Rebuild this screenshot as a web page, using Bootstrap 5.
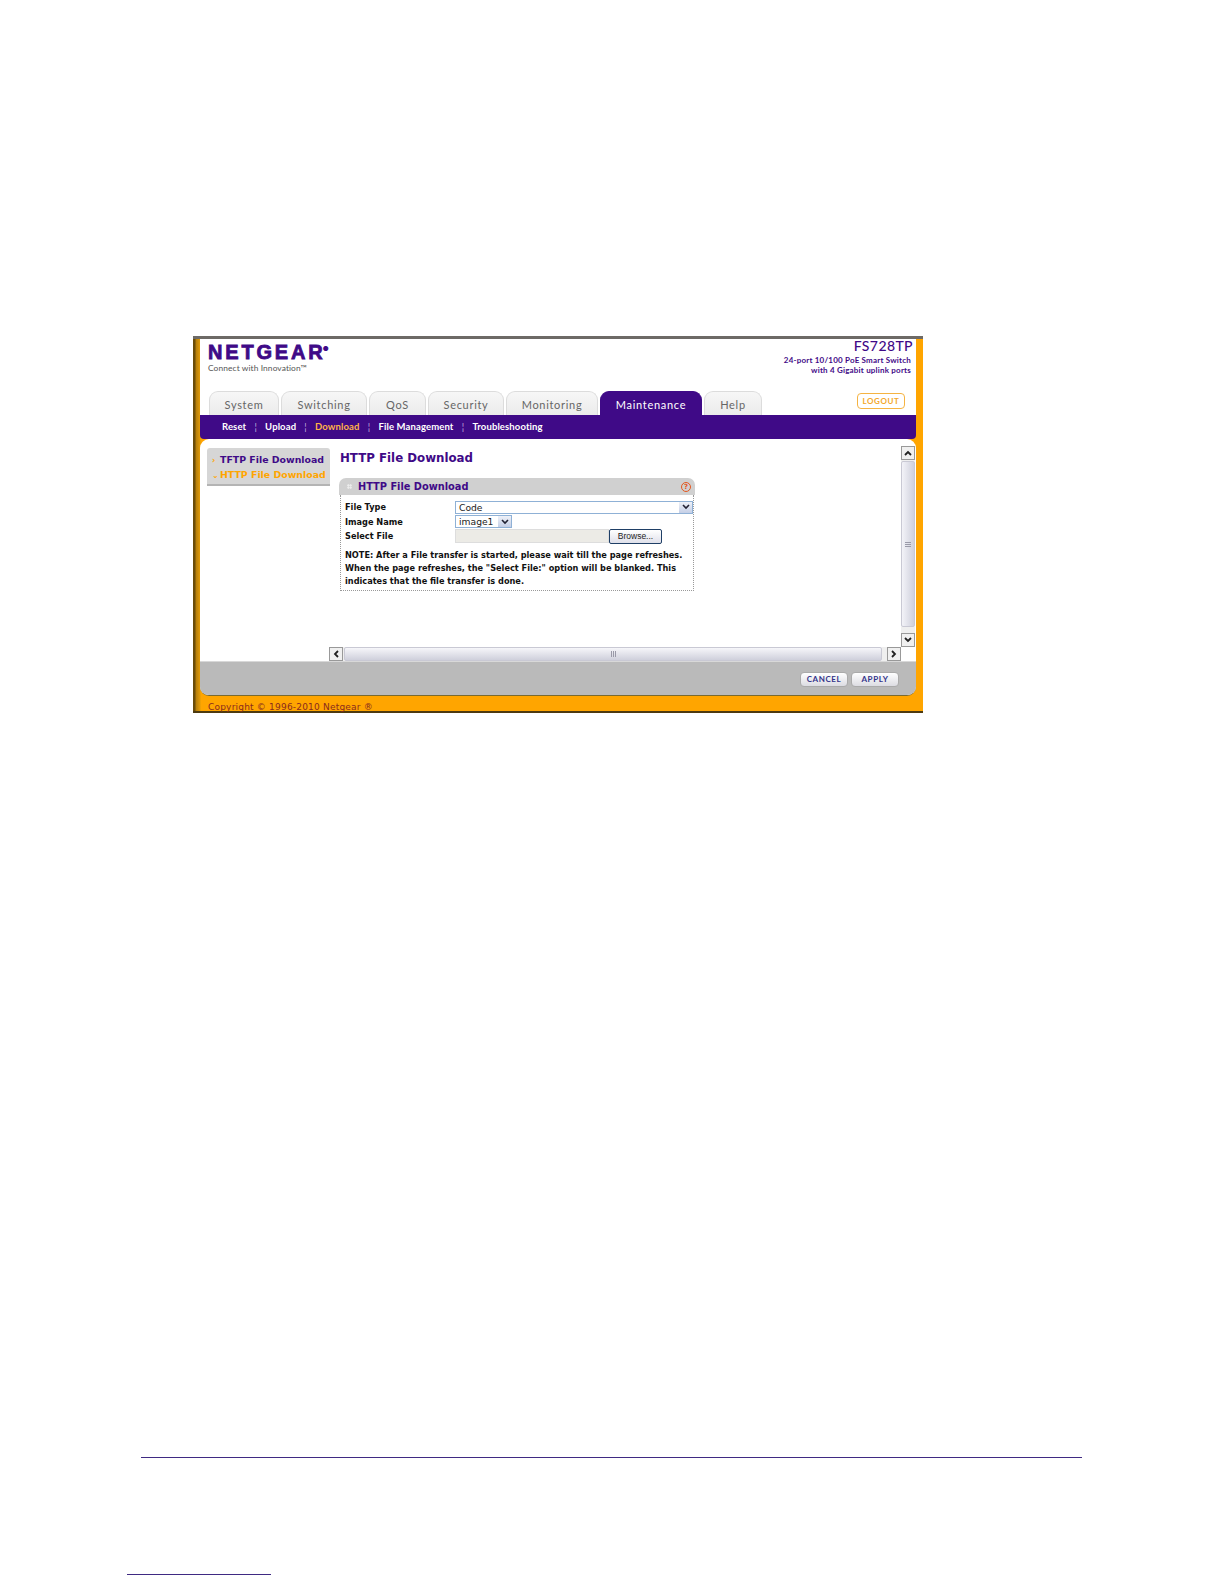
<!DOCTYPE html>
<html lang="en"><head><meta charset="utf-8"><title>HTTP File Download</title>
<link href="https://cdn.jsdelivr.net/npm/bootstrap@5.3.0/dist/css/bootstrap.min.css" rel="stylesheet">
<style>
body{background:#fff;height:1584px;padding:336px 0 0 193px;overflow:hidden;font-family:"DejaVu Sans",sans-serif;color:#111}
.shot{width:730px;height:377px;background:linear-gradient(90deg,#6a4c08 0,#6a4c08 2px,#b57e0b 3px,#e09a08 7px,#ffa500 8px);border-top:3px solid #6d6a66;border-bottom:2px solid #4d3a10;padding:0 7px;display:flex;flex-direction:column}
.head{height:76px;background:#fff;padding:0 3px 0 8px;position:relative;flex:none}
.brand{display:flex;justify-content:space-between;height:49px}
.logo{font:900 20px/20px "Liberation Sans",sans-serif;color:#3f0a87;letter-spacing:2.8px;padding-top:3px;-webkit-text-stroke:.8px #3f0a87}
.logo sup{font-size:6px;top:-8px;letter-spacing:0;margin-left:-2px}
.tag{font:400 8.4px/10px Lato,sans-serif;color:#555;margin-top:1px;letter-spacing:.1px}
.model{text-align:right;color:#3f0a87;font:700 8px/10px Lato,sans-serif;letter-spacing:.2px}
.model b{display:block;font:500 14px/14px Lato,sans-serif;letter-spacing:.4px;margin-bottom:2px}
.model span{display:block;padding-right:2px}
.tabs{display:flex;gap:2px;position:absolute;left:9px;bottom:0;height:24px;margin:0;padding:0;list-style:none}
.tabs li{border:1px solid #dcdcdc;border-bottom:0;border-radius:9px 9px 0 0;background:linear-gradient(#f7f7f7,#ebebeb);color:#666;font:400 11px/25px Lato,sans-serif;letter-spacing:.7px;text-align:center}
.tabs li.on{background:#3f0a87;border-color:#3f0a87;color:#fff}
.logout{position:absolute;right:11px;bottom:6px;width:48px;height:16px;border:1px solid #f5b342;border-radius:4px;color:#f3a72c;font:700 8px/14px Lato,sans-serif;text-align:center;letter-spacing:.6px;background:#fff}
.subnav{height:24px;background:#3f0a87;flex:none;display:flex;align-items:center;padding-left:22px;color:#fff;font:700 9.5px/24px Lato,sans-serif;border-radius:0 0 4px 4px;letter-spacing:.12px}
.subnav i{font-style:normal;color:#c9b8e0;margin:0 8.2px;font-weight:400}
.subnav .cur{color:#ffb347}
.panel{flex:1;display:flex;flex-direction:column;background:#fff;border-radius:9px;overflow:hidden;border-bottom:1px solid #7a6a30;min-height:0}
.work{flex:1;position:relative;min-height:0;display:flex;padding:9px 0 0 7px}
.side{width:123px;height:38px;background:#d6d6d6;border-bottom:2px solid #b4b4b4;border-radius:3px 3px 0 0;font:700 9.4px/15px "DejaVu Sans",sans-serif;color:#3f0a87;padding:4px 0 0 5px;white-space:nowrap;flex:none}
.side em{display:inline-block;width:8px;line-height:10px;font-style:normal;color:#ffa500;font-size:8px}
.side .cur{color:#ffa500}
.main{margin-left:10px;width:354px;flex:none}
.main h1{font:700 11.8px/18px "DejaVu Sans",sans-serif;color:#3f0a87;margin:0 0 11px;padding-top:1px}
.box{height:96px;border:1px dotted #999;border-top:0;padding-top:5px}
.boxhead{height:17px;margin:0 -1px;background:#d0d0d0;border-radius:7px 7px 0 0;display:flex;align-items:center;padding:0 4px 0 8px;color:#3f0a87;font:700 9.8px/17px "DejaVu Sans",sans-serif}
.grip{width:5px;height:5px;margin-right:6px;background:radial-gradient(circle,#eee 1px,transparent 1.2px) 0 0/2.5px 2.5px}
.help{margin-left:auto;width:10px;height:10px;border:1px solid #e4571f;border-radius:50%;color:#e4571f;font:700 7px/8px "DejaVu Sans",sans-serif;text-align:center}
.frow{display:flex;align-items:center;height:14.6px;padding-left:4px;font:700 8.2px/14px "DejaVu Sans",sans-serif}
.frow label{width:110px;flex:none;margin:0}
.fsel{height:13px;border:1px solid #8fb1d6;background:#fff;font:400 9.2px/11px "DejaVu Sans",sans-serif;padding-left:3px;display:flex;justify-content:space-between;align-items:center;color:#222}
.arrow{width:13px;height:11px;background:linear-gradient(#eef1f8,#c5cfe6);display:flex;align-items:center;justify-content:center;flex:none}
.finput{width:154px;height:14px;background:#ecebe6;border:1px solid #ddd}
.browse{width:53px;height:15px;border:1px solid #1f3f66;border-radius:2px;background:linear-gradient(#fff,#dfe0ea);font:400 8.5px/13px "Liberation Sans",sans-serif;text-align:center;color:#222}
.note{font:700 8.2px/13px "DejaVu Sans",sans-serif;padding:5px 0 0 4px;margin:0;white-space:nowrap}
.barv{right:1px;top:7px;bottom:14px;width:14px;background:#efefef;position:absolute}
.thumbv{position:absolute;left:0;right:0;top:15px;bottom:20px;background:linear-gradient(90deg,#f3f3f8,#cfd0dc);border:1px solid #c9c9d4;border-radius:2px;display:flex;align-items:center;justify-content:center}
.barh{left:129px;right:15px;bottom:0;height:14px;position:absolute;background:#efefef}
.thumbh{position:absolute;left:15px;right:19px;top:0;bottom:0;background:linear-gradient(#f6f6fa,#cfd0dc);border:1px solid #c9c9d4;border-radius:2px;display:flex;align-items:center;justify-content:center}
.sb{position:absolute;width:14px;height:14px;background:#f0f0f0;border:1px solid #999;display:flex;align-items:center;justify-content:center}
.foot{height:34px;flex:none;background:#bababa;border-top:1px solid #d8d8d8;display:flex;justify-content:flex-end;align-items:center;gap:3px;padding:2px 17px 0 0}
.fbtn{width:48px;height:15px;border-radius:4px;background:linear-gradient(#fff,#dcdce2);border:1px solid #aaa;color:#33338a;font:700 8px/13px Lato,sans-serif;text-align:center;letter-spacing:.6px}
.copy{height:15px;flex:none;font:400 9px/22px "DejaVu Sans",sans-serif;color:#8a2b1e;padding-left:8px;letter-spacing:.2px;overflow:visible}
.rule1{margin:744px 0 0 -52px;width:941px;height:1px;background:#3f2a82}
.rule2{margin:116px 0 0 -66px;width:144px;height:1px;background:#3f2a82}
</style></head>
<body>
<div class="shot">
  <div class="head">
    <div class="brand">
      <div><div class="logo">NETGEAR<sup>®</sup></div><div class="tag">Connect with Innovation™</div></div>
      <div class="model"><b>FS728TP</b><span>24-port 10/100 PoE Smart Switch</span><span>with 4 Gigabit uplink ports</span></div>
    </div>
    <ul class="tabs">
      <li style="width:70px">System</li><li style="width:86px">Switching</li><li style="width:57px">QoS</li><li style="width:76px">Security</li><li style="width:92px">Monitoring</li><li class="on" style="width:102px">Maintenance</li><li style="width:58px">Help</li>
    </ul>
    <div class="logout">LOGOUT</div>
  </div>
  <div class="subnav"><span>Reset</span><i>¦</i><span>Upload</span><i>¦</i><span class="cur">Download</span><i>¦</i><span>File Management</span><i>¦</i><span>Troubleshooting</span></div>
  <div class="panel">
    <div class="work">
      <div class="side"><div><em>›</em>TFTP File Download</div><div class="cur"><em>⌄</em>HTTP File Download</div></div>
      <div class="main">
        <h1>HTTP File Download</h1>
        <div class="boxhead"><span class="grip"></span>HTTP File Download<span class="help">?</span></div>
        <div class="box">
          <div class="frow"><label>File Type</label><div class="fsel" style="width:238px"><span>Code</span><span class="arrow"><svg width="8" height="6" viewBox="0 0 8 6"><path d="M1 1l3 3 3-3" fill="none" stroke="#223" stroke-width="1.6"/></svg></span></div></div>
          <div class="frow"><label>Image Name</label><div class="fsel" style="width:57px"><span>image1</span><span class="arrow"><svg width="8" height="6" viewBox="0 0 8 6"><path d="M1 1l3 3 3-3" fill="none" stroke="#223" stroke-width="1.6"/></svg></span></div></div>
          <div class="frow"><label>Select File</label><div class="finput"></div><div class="browse">Browse...</div></div>
          <p class="note">NOTE: After a File transfer is started, please wait till the page refreshes.<br>When the page refreshes, the "Select File:" option will be blanked. This<br>indicates that the file transfer is done.</p>
        </div>
      </div>
      <div class="barv"><div class="sb" style="top:0;left:0"><svg width="8" height="6" viewBox="0 0 8 6"><path d="M1 5l3-3 3 3" fill="none" stroke="#222" stroke-width="1.8"/></svg></div><div class="thumbv"><svg width="6" height="5" viewBox="0 0 6 5"><path d="M0 .5h6M0 2.5h6M0 4.5h6" stroke="#9a9aa8"/></svg></div><div class="sb" style="bottom:0;left:0"><svg width="8" height="6" viewBox="0 0 8 6"><path d="M1 1l3 3 3-3" fill="none" stroke="#222" stroke-width="1.8"/></svg></div></div>
      <div class="barh"><div class="sb" style="left:0;top:0"><svg width="6" height="8" viewBox="0 0 6 8"><path d="M5 1L2 4l3 3" fill="none" stroke="#222" stroke-width="1.8"/></svg></div><div class="thumbh"><svg width="5" height="6" viewBox="0 0 5 6"><path d="M.5 0v6M2.5 0v6M4.5 0v6" stroke="#9a9aa8"/></svg></div><div class="sb" style="right:0;top:0"><svg width="6" height="8" viewBox="0 0 6 8"><path d="M1 1l3 3-3 3" fill="none" stroke="#222" stroke-width="1.8"/></svg></div></div>
    </div>
    <div class="foot"><div class="fbtn">CANCEL</div><div class="fbtn">APPLY</div></div>
  </div>
  <div class="copy">Copyright © 1996-2010 Netgear ®</div>
</div>
<div class="rule1"></div>
<div class="rule2"></div>
</body></html>
